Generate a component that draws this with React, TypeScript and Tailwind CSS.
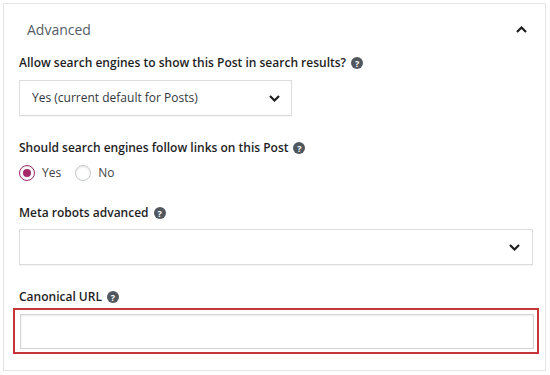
function HelpIcon() {
  return (
    <span className="ml-[5px] inline-flex h-[12px] w-[12px] items-center justify-center rounded-full bg-[#50575e] text-[9px] font-bold leading-none text-white">
      ?
    </span>
  )
}

function Chevron({ up = false }: { up?: boolean }) {
  return (
    <svg width="11" height="7" viewBox="0 0 11 7" className="shrink-0">
      <polyline
        points={up ? '1,6 5.5,1.5 10,6' : '1,1 5.5,5.5 10,1'}
        fill="none"
        stroke="#1e1e1e"
        strokeWidth="2.2"
      />
    </svg>
  )
}

function Radio({ checked, label }: { checked: boolean; label: string }) {
  return (
    <label className="flex items-center gap-[7px]">
      <span
        className={`flex h-[16px] w-[16px] items-center justify-center rounded-full border bg-white shadow-[inset_0_1px_2px_rgba(0,0,0,0.1)] ${
          checked ? 'border-[#a4286a]' : 'border-[#c5c9cc]'
        }`}
      >
        {checked && <span className="h-[8px] w-[8px] rounded-full bg-[#a4286a]" />}
      </span>
      <span className="text-[12px] text-[#444]">{label}</span>
    </label>
  )
}

export default function App() {
  return (
    <div className="h-[375px] w-[550px] bg-white pt-[3px] pl-[3px] font-['Open_Sans',sans-serif] text-[#1e1e1e]">
      <div className="flex h-[368px] w-[543px] flex-col border border-[#e2e4e7]">
        {/* Header */}
        <div className="flex h-[50px] items-center justify-between pl-[23px] pr-[18px]">
          <span className="text-[14px] text-[#555d66]">Advanced</span>
          <Chevron up />
        </div>

        <div className="flex flex-col pl-[15px] pr-[12px]">
          <div className="flex h-[18px] items-center text-[12px] font-semibold">
            Allow search engines to show this Post in search results? <HelpIcon />
          </div>
          <div className="mt-[8px] flex h-[36px] w-[273px] items-center justify-between border border-[#dcdcdc] pl-[12px] pr-[11px] shadow-[0_1px_1px_rgba(0,0,0,0.04)]">
            <span className="text-[12px] text-[#32373c]">Yes (current default for Posts)</span>
            <Chevron />
          </div>

          <div className="mt-[23px] flex h-[18px] items-center text-[12px] font-semibold">
            Should search engines follow links on this Post <HelpIcon />
          </div>
          <div className="mt-[6px] flex h-[20px] items-center gap-[14px]">
            <Radio checked label="Yes" />
            <Radio checked={false} label="No" />
          </div>

          <div className="mt-[21px] flex h-[18px] items-center text-[12px] font-semibold">
            Meta robots advanced <HelpIcon />
          </div>
          <div className="mt-[7px] flex h-[36px] items-center justify-end border border-[#dcdcdc] pr-[12px] shadow-[0_1px_1px_rgba(0,0,0,0.04)]">
            <Chevron />
          </div>

          <div className="mt-[23px] flex h-[18px] items-center text-[12px] font-semibold">
            Canonical URL <HelpIcon />
          </div>
          <div className="mx-[-6px] mt-[2px] border-2 border-[#c4353a] pt-[4px] pb-[3px] pl-[5px] pr-[3px]">
            <div className="h-[35px] border border-[#d4d4d4] bg-white shadow-[inset_0_1px_2px_rgba(0,0,0,0.08)]" />
          </div>
        </div>
      </div>
    </div>
  )
}
